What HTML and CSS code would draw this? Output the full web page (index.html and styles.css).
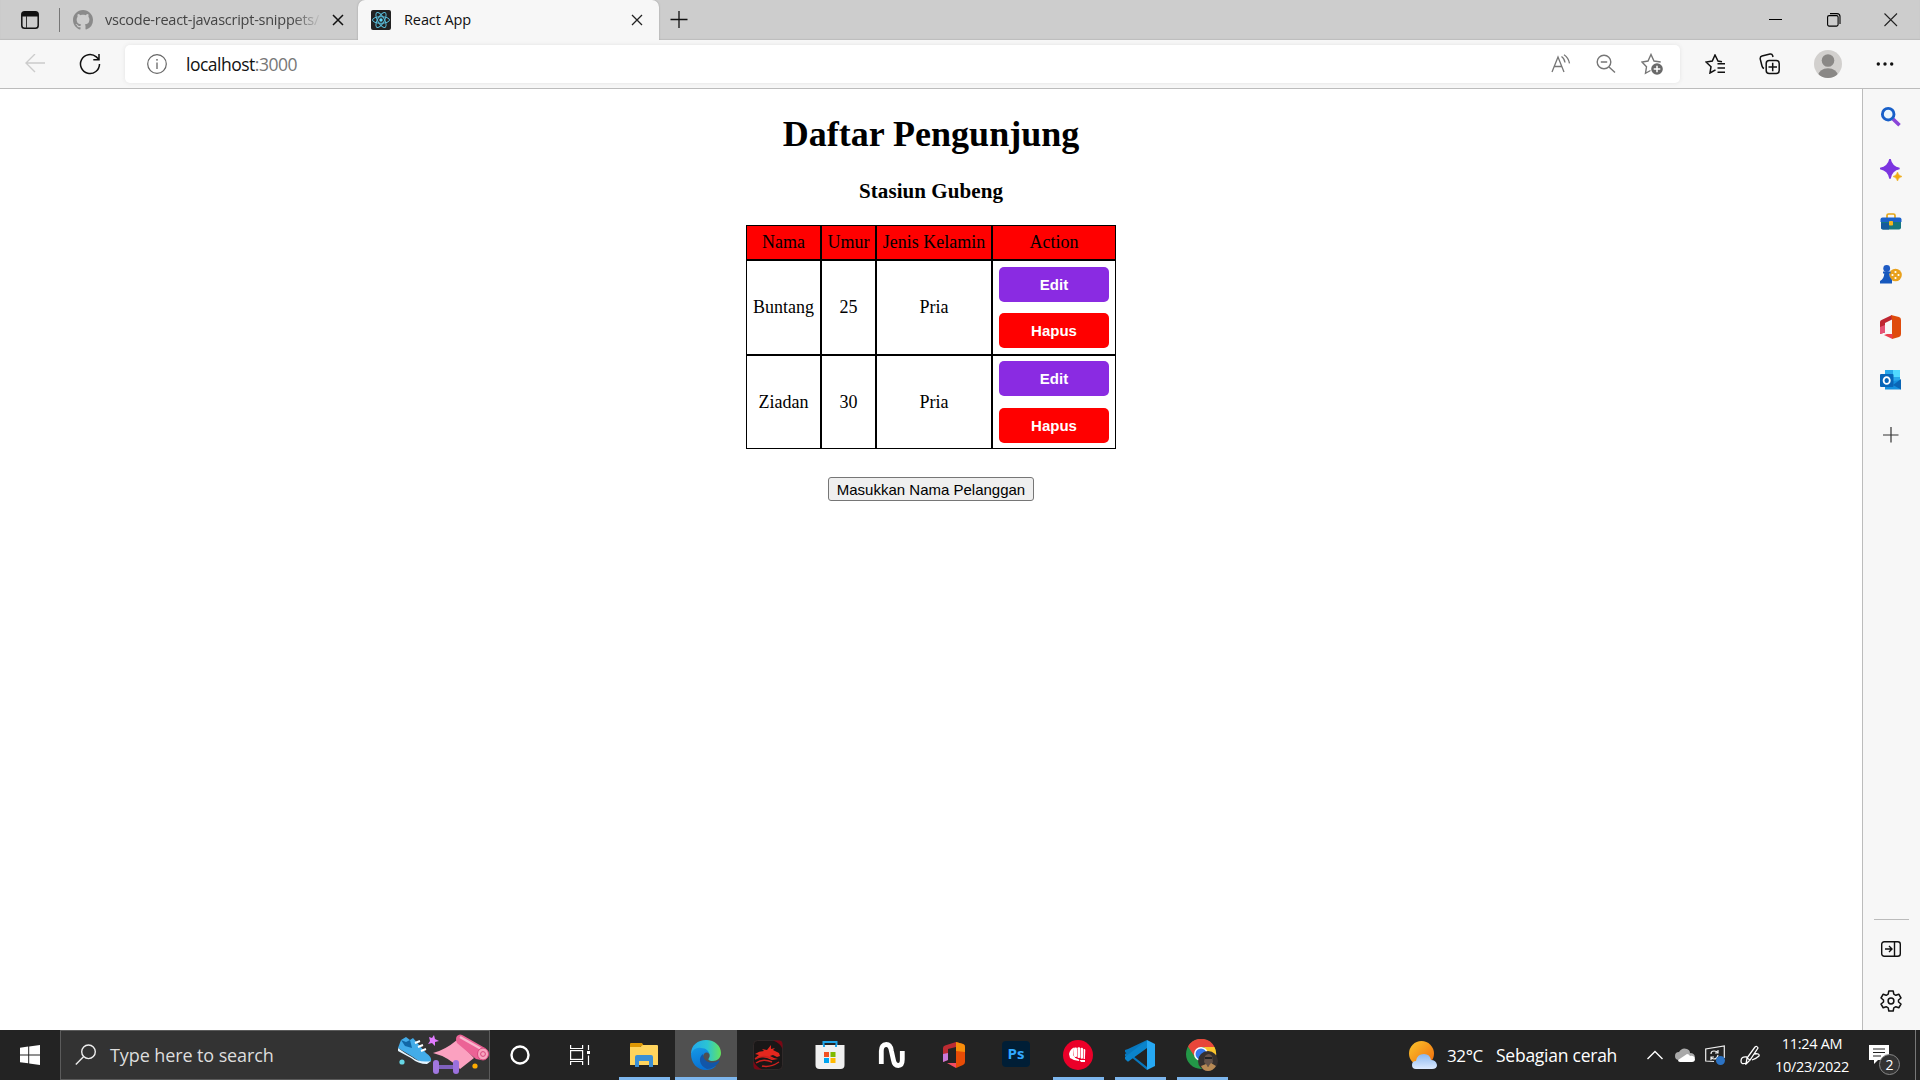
FILE: index.html
```html
<!DOCTYPE html>
<html lang="id">
<head>
<meta charset="utf-8">
<title>React App</title>
<link rel="stylesheet" href="styles.css">
</head>
<body>
<header class="tabbar">
  <svg class="tab-menu" width="18" height="18" viewBox="0 0 18 18"><rect x=".8" y=".8" width="16.4" height="16.4" rx="2.8" fill="none" stroke="#111" stroke-width="1.5"/><path d="M1 5.5V3.3Q1 1 3.300 1h11.400Q17 1 17 3.300v2.200z" fill="#111"/><path d="M5.500 5v12" stroke="#333"/></svg>
  <i class="divider"></i>
  <div class="tab idle">
    <svg width="20" height="20" viewBox="0 0 16 16"><path fill="#8a8a8a" d="M8 0C3.580 0 0 3.580 0 8c0 3.540 2.290 6.530 5.470 7.590.4.070.55-.17.55-.38 0-.19-.01-.82-.01-1.490-2.010.37-2.530-.49-2.690-.94-.09-.23-.48-.94-.82-1.130-.28-.15-.68-.52-.01-.53.63-.01 1.080.58 1.230.82.72 1.210 1.870.87 2.330.66.070-.52.28-.87.51-1.070-1.780-.2-3.640-.89-3.640-3.950 0-.87.31-1.590.82-2.150-.08-.2-.36-1.020.08-2.120 0 0 .67-.21 2.200.82.64-.18 1.320-.27 2-.27s1.360.09 2 .27c1.530-1.040 2.200-.82 2.200-.82.44 1.100.16 1.920.08 2.120.51.56.82 1.270.82 2.150 0 3.070-1.870 3.750-3.650 3.950.29.25.54.73.54 1.480 0 1.070-.01 1.930-.01 2.200 0 .21.15.46.55.38A8.010 8.010 0 0 0 16 8c0-4.420-3.580-8-8-8z"/></svg>
    <span class="tab-title faded">vscode-react-javascript-snippets/</span>
    <svg class="x" width="12" height="12" viewBox="0 0 12 12"><path d="M1 1l10 10M11 1L1 11" stroke="#111" stroke-width="1.5"/></svg>
  </div>
  <div class="tab active">
    <svg width="20" height="20" viewBox="0 0 20 20"><rect width="20" height="20" rx="2" fill="#222"/><g fill="none" stroke="#58bcd9" stroke-width="1"><ellipse cx="10" cy="10" rx="8.500" ry="3.300"/><ellipse cx="10" cy="10" rx="8.500" ry="3.300" transform="rotate(60 10 10)"/><ellipse cx="10" cy="10" rx="8.500" ry="3.300" transform="rotate(120 10 10)"/></g><circle cx="10" cy="10" r="1.700" fill="#61dafb"/></svg>
    <span class="tab-title">React App</span>
    <svg class="x" width="12" height="12" viewBox="0 0 12 12"><path d="M1 1l10 10M11 1L1 11" stroke="#222" stroke-width="1.300"/></svg>
  </div>
  <svg class="new-tab" width="18" height="18" viewBox="0 0 18 18"><path d="M.5 8.500h17M9 0v17" stroke="#111" stroke-width="1.300"/></svg>
  <div class="window-controls">
    <svg width="14" height="14" viewBox="0 0 14 14"><path d="M0 6.500h13" stroke="#000"/></svg>
    <svg width="14" height="14" viewBox="0 0 14 14"><rect x=".6" y="2.600" width="10.500" height="10.500" rx="1.500" fill="none" stroke="#000" stroke-width="1.100"/><path d="M3 .6h7q3 0 3 3V11" fill="none" stroke="#000" stroke-width="1.100"/></svg>
    <svg width="14" height="14" viewBox="0 0 14 14"><path d="M.5.500l12.500 12.500M13 .5L.5 13" stroke="#222" stroke-width="1.100"/></svg>
  </div>
</header>

<nav class="toolbar">
  <svg class="back" width="20" height="20" viewBox="0 0 20 20"><path d="M20 9H1M10 0L1 9l9 9" fill="none" stroke="#ccc" stroke-width="1.400"/></svg>
  <svg class="reload" width="22" height="22" viewBox="0 0 22 22"><path d="M20.500 11a9.500 9.500 0 1 1-3.200-7.100L20 6.500M20 1v5.700h-5.700" fill="none" stroke="#111" stroke-width="1.500"/></svg>
  <div class="address">
    <svg width="20" height="20" viewBox="0 0 20 20"><circle cx="10" cy="10" r="9.300" fill="none" stroke="#666" stroke-width="1.200"/><path d="M10 8.500V15" stroke="#666" stroke-width="1.300"/><circle cx="10" cy="5.800" r=".9" fill="#666"/></svg>
    <span class="url">localhost<span class="port">:3000</span></span>
    <div class="address-actions">
      <svg width="20" height="20" viewBox="0 0 20 20" fill="none" stroke="#767676" stroke-width="1.300"><path d="M1 18L7 3l6 15M3.200 12.500h7.600M10.500 2.500q3 2 3.500 6M13 .8q4.500 3 5.500 8.500"/></svg>
      <svg width="20" height="20" viewBox="0 0 20 20" fill="none" stroke="#767676" stroke-width="1.400"><circle cx="8" cy="8" r="6.800"/><path d="M4.800 8h6.400M13 13l6 5.500"/></svg>
      <svg width="22" height="22" viewBox="0 0 22 22"><path d="M9.500 17.500L4.500 20.300l1-6.500L1 9l6-1 3-6.500L13 8l6.700 1" fill="none" stroke="#767676" stroke-width="1.400"/><circle cx="16" cy="16" r="5.800" fill="#696969"/><path d="M12.700 16h6.600M16 12.700v6.600" stroke="#fff" stroke-width="1.500"/></svg>
    </div>
  </div>
  <div class="toolbar-icons">
    <svg width="20" height="20" viewBox="0 0 20 20" fill="none" stroke="#111" stroke-width="1.500"><path d="M10.500 15.800L5 19l1-6.300L1 8l6.300-1L10 1l3 6 4 .7M12.500 9.800H20M12.500 14H20M12.500 18.300H20"/></svg>
    <svg width="22" height="22" viewBox="0 0 22 22" fill="none" stroke="#111" stroke-width="1.500"><path d="M5 15.500Q3.500 15 3 13L1.200 6Q1 3.500 3 3L11 1q2-.4 2.600 1.400L14 4"/><rect x="7.200" y="7.500" width="13" height="13" rx="3"/><path d="M9.500 14h8.500M13.700 9.700v8.500"/></svg>
    <svg width="28" height="28" viewBox="0 0 28 28"><clipPath id="face"><circle cx="14" cy="14" r="14"/></clipPath><g clip-path="url(#face)"><rect width="28" height="28" fill="#d2d0ce"/><circle cx="14" cy="10.500" r="6.300" fill="#8a8886"/><ellipse cx="14" cy="26" rx="10" ry="7.800" fill="#8a8886"/></g></svg>
    <svg width="18" height="6" viewBox="0 0 18 6" fill="#111"><circle cx="2.300" cy="3" r="1.700"/><circle cx="9" cy="3" r="1.700"/><circle cx="15.700" cy="3" r="1.700"/></svg>
  </div>
</nav>

<div class="workspace">
  <main class="page">
    <h1>Daftar Pengunjung</h1>
    <h3>Stasiun Gubeng</h3>
    <table class="visitors">
      <colgroup><col class="c-name"><col class="c-age"><col class="c-sex"><col class="c-action"></colgroup>
      <tr class="head"><td>Nama</td><td>Umur</td><td>Jenis Kelamin</td><td>Action</td></tr>
      <tr class="first"><td>Buntang</td><td>25</td><td>Pria</td><td class="action-cell"><div class="actions"><button class="edit">Edit</button><button class="delete">Hapus</button></div></td></tr>
      <tr class="second"><td>Ziadan</td><td>30</td><td>Pria</td><td class="action-cell"><div class="actions"><button class="edit">Edit</button><button class="delete">Hapus</button></div></td></tr>
    </table>
    <button class="add">Masukkan Nama Pelanggan</button>
  </main>
  <aside class="sidebar">
    <div class="apps">
      <svg width="22" height="22" viewBox="0 0 22 22"><path d="M13 13l6.500 6.200" stroke="#8a45d8" stroke-width="3.600"/><circle cx="8.200" cy="8.200" r="5.800" fill="#eaf6fd" stroke="#175fc9" stroke-width="2.900"/></svg>
      <svg width="22" height="22" viewBox="0 0 22 22"><path d="M10 0q1.500 8 9.500 9.500Q11.500 11 10 19.500 8.500 11 0 9.500 8.500 8 10 0z" fill="#7c35e0" stroke="#7c35e0" stroke-width="1.500"/><path d="M17.500 13q.8 3.800 4.500 4.500-3.700.8-4.500 4.500-.8-3.700-4.500-4.500 3.700-.7 4.500-4.500z" fill="#efaa14" stroke="#efaa14" stroke-width=".6"/></svg>
      <svg width="22" height="22" viewBox="0 0 22 22"><path d="M7 7V4.500Q7 3 8.500 3h5Q15 3 15 4.500V7" fill="none" stroke="#e5a617" stroke-width="1.700"/><path d="M1 10h20v6.500q0 2-2 2H3q-2 0-2-2z" fill="#16777f"/><path d="M1 12h8v6.500H3q-2 0-2-2z" fill="#155a9e"/><path d="M.5 8.500q0-2 2-2h17q2 0 2 2V11H.5z" fill="#1b62cc"/><rect x="9" y="10" width="4" height="4.500" rx=".8" fill="#f6b51e"/></svg>
      <svg width="22" height="22" viewBox="0 0 22 22"><circle cx="15.500" cy="11" r="6.300" fill="#e9a11d"/><g fill="#fff"><circle cx="15.500" cy="8" r="1.100"/><circle cx="15.500" cy="14" r="1.100"/><circle cx="12.500" cy="11" r="1.100"/><circle cx="18.500" cy="11" r="1.100"/></g><circle cx="6.700" cy="4.500" r="3.400" fill="#1e5bc4"/><path d="M3 7.500h7.500v2H9q.3 4.500 3 6.500v3.500H0V17q4-2 4.300-7.500H3z" fill="#1758bd"/></svg>
      <svg class="office" width="22" height="24" viewBox="0 0 22 24"><path d="M0 7Q0 5.500 1.500 5L12 0v4.500L5 8v9.500L0 19z" fill="#bf2631"/><path d="M0 12l5-2v7.500L0 19z" fill="#e65275"/><path d="M11 0l8 2q2 .5 2 3v14q0 2.500-2 3l-7 2V5z" fill="#df4b0c"/><path d="M4 20l3-1h5.500v5z" fill="#eb3e4e"/></svg>
      <svg width="22" height="22" viewBox="0 0 22 22"><path d="M5 1h15v12H5z" fill="#28a8ea"/><path d="M13 1h7v7h-7z" fill="#50d9ff"/><path d="M5 13l16-2v9.500H5z" fill="#1490df"/><path d="M21 10v10.500L13 16z" fill="#0a65b5"/><rect y="5" width="13.500" height="13" rx="1" fill="#0865b8"/><ellipse cx="6.700" cy="11.500" rx="3.100" ry="3.400" fill="none" stroke="#fff" stroke-width="1.800"/></svg>
      <svg width="16" height="16" viewBox="0 0 16 16"><path d="M0 8h15.500M8 0v15.500" stroke="#333" stroke-width="1.200"/></svg>
    </div>
    <div class="settings">
      <svg width="20" height="16" viewBox="0 0 20 16" fill="none" stroke="#111" stroke-width="1.400"><rect x=".7" y=".8" width="18.600" height="14.400" rx="2.500"/><path d="M13.500 1v14M4 8h7M8 5l3 3-3 3"/></svg>
      <svg width="22" height="22" viewBox="0 0 22 22" fill="none" stroke="#111" stroke-width="1.500" stroke-linejoin="round"><path d="M8.800 1h4.400l.6 3.200 2 1.100 3-1.100 2.200 3.800-2.500 2v2l2.500 2-2.200 3.800-3-1.100-2 1.100-.6 3.200H8.800l-.6-3.200-2-1.100-3 1.100L1 14l2.500-2v-2L1 8l2.200-3.800 3 1.100 2-1.100z"/><circle cx="11" cy="11" r="2.900"/></svg>
    </div>
  </aside>
</div>

<footer class="taskbar">
  <div class="start"><svg width="20" height="20" viewBox="0 0 20 20" fill="#fff"><path d="M0 2.800L8.200 1.600v7.800H0zM9.200 1.400L20 0v9.400H9.200zM0 10.400h8.200v7.900L0 17.200zM9.200 10.400H20V20L9.200 18.400z"/></svg></div>
  <div class="search">
    <svg width="22" height="22" viewBox="0 0 22 22" fill="none" stroke="#eee" stroke-width="1.400"><circle cx="13.500" cy="7.800" r="6.800"/><path d="M8.500 12.800L.8 20.500"/></svg>
    <span class="search-text">Type here to search</span>
    <svg class="art" width="92" height="44" viewBox="0 0 92 44">
      <path d="M1 15L4 7l5-3 4 3 3-2 13 15q6 4 5 8l-5 2q-7-1-13-6Z" fill="#43ace9"/><path d="M1 15q8 6 14 9 7 6 19 4l-4 3q-9 0-16-6L1 18z" fill="#e5f5ff"/><path d="M4 7l4 6 7 2-2-8-4 2z" fill="#1267a6"/><path d="M18 10l5-2M21 14l5-2M24 18l5-2" stroke="#fff" stroke-width="2"/>
      <path d="M36 20q12-3 24-13l17 18-14 11Q52 24 36 20z" fill="#fba1c0"/><path d="M60 3q3-3 7 0l21 12-4 12-5-1L60 10q-2-4 0-7z" fill="#ec6396"/><path d="M63 4l23 13" stroke="#fab5cd" stroke-width="2.500"/><ellipse cx="86" cy="21" rx="5.500" ry="6" fill="#f8a5c0" stroke="#d9477e"/><circle cx="86" cy="21" r="2.400" fill="none" stroke="#d9477e"/>
      <path d="M32 4l3 1 2-3 1 4 4 2-4 1v4l-3-3-4 1 2-3z" fill="#e17cff"/><path d="M38 34h22" stroke="#7e61bd" stroke-width="4"/><rect x="36" y="27" width="6" height="14" rx="3" fill="#a077df"/><rect x="56" y="27" width="6" height="14" rx="3" fill="#9b70dd"/><circle cx="5" cy="29" r="2.600" fill="#67d7e5"/><circle cx="78" cy="33" r="2.600" fill="#ffac00"/>
    </svg>
  </div>
  <div class="system-button"><svg width="20" height="20" viewBox="0 0 20 20"><circle cx="10" cy="10" r="8.500" fill="none" stroke="#fff" stroke-width="2.400"/></svg></div>
  <div class="system-button"><svg width="20" height="20" viewBox="0 0 20 20" fill="none" stroke="#fff" stroke-width="1.200"><path d="M.6 0v3.500h12V0M.6 20v-3.500h12V20M18.500 0v5M18.500 10.500V20"/><rect x=".6" y="5.600" width="12" height="8.800"/><path d="M17 7.500h3" stroke-width="3"/></svg></div>
  <div class="task running"><svg width="28" height="26" viewBox="0 0 28 26"><path d="M0 2Q0 1 1 1h11l2 3h-3L9 6H0z" fill="#dd9704"/><path d="M0 5h10l3-2h14q1 0 1 1v19H0z" fill="#ffd45d"/><path d="M5 25V15q0-2 2-2h14q2 0 2 2v10h-4v-6H9v6z" fill="#3b8fd5"/></svg></div>
  <div class="task running current"><svg width="30" height="30" viewBox="0 0 30 30"><defs><linearGradient id="wave"><stop stop-color="#21a7ed"/><stop offset=".55" stop-color="#2bc4d3"/><stop offset="1" stop-color="#65e45d"/></linearGradient><linearGradient id="deep" x2=".3" y2="1"><stop stop-color="#1598e4"/><stop offset="1" stop-color="#0871d3"/></linearGradient></defs><path d="M0 14C0 5 7 0 15 0c9 0 15 6 15 13 0 5-4 8-8 8-5 0-5-2-4-3 4-7-9-12-18-4z" fill="url(#wave)"/><path d="M0 14c2-5 6-7 10-6 5 0 8 3 8 6-2-3-6-1-6 3 0 6 7 10 13 9-3 3-7 4-10 4C6 30 0 23 0 14z" fill="url(#deep)"/><path d="M12 14c-5 3-4 12 4 15 5 0 9-3 12-7 1-1 0-2-1-1-8 4-15 0-15-7z" fill="#1256a8"/></svg></div>
  <div class="task"><svg width="30" height="30" viewBox="0 0 30 30"><rect x=".5" y=".5" width="29" height="29" rx="4" fill="#191717" stroke="#302929"/><path d="M20 .5h6q3.500 0 3.500 4V9q-2-6-9.500-8.500zM.5 21v5q0 3.500 4 3.500h5q-6-2-9-8.500z" fill="#7b0714"/><path d="M2 14q4-3 9-3l-2-2 5 1 4-5v4l4-1-2 2 6 3 1 3-3 1-4-2-3 1 4 2 4 1-6 1-5-2-5-1-7 1 4-3z" fill="#e5271e"/><path d="M2 19q9-5 18 0M3 23q7-5 16-1M9 26q8 2 17-4" fill="none" stroke="#cf211e" stroke-width="1.500"/></svg></div>
  <div class="task"><svg width="30" height="30" viewBox="0 0 30 30"><path d="M8.500 7V2h13v5" fill="none" stroke="#20a5e9" stroke-width="2"/><path d="M.5 5h29v20q0 4-4 4h-21q-4 0-4-4z" fill="#f0f0f0"/><path d="M8 5h2v2H8zM20 5h2v2h-2z" fill="#20a5e9"/><path d="M9 12h5v5H9z" fill="#f25022"/><path d="M15.500 12h5v5h-5z" fill="#7fba00"/><path d="M9 18h5v5H9z" fill="#00a4ef"/><path d="M15.500 18h5v5h-5z" fill="#ffb900"/></svg></div>
  <div class="task"><svg width="28" height="28" viewBox="0 0 28 28"><path d="M3.300 23V10q0-6.500 5-6.500 4 0 5 6l2 9q1 6 5 6t4-6V10" fill="none" stroke="#fff" stroke-width="4.800"/></svg></div>
  <div class="task"><svg width="24" height="28" viewBox="0 0 24 28"><path d="M1 7Q1 5 3 4.500L14 1v5L6 8v11l-5 2z" fill="#bd2b32"/><path d="M1 13l5-1v7l-5 2z" fill="#c979d9"/><path d="M14 1l7 2q2 .5 2 3v15q0 2-2 3l-7 3z" fill="#e74c06"/><path d="M14 1l7 2q2 .5 2 3v5l-9-1z" fill="#f78e0b"/><path d="M5 22h9v5z" fill="#f34b63"/></svg></div>
  <div class="task"><div class="ps">Ps</div></div>
  <div class="task running"><svg width="30" height="30" viewBox="0 0 30 30"><circle cx="15" cy="15" r="15" fill="#eb0029"/><g fill="#fff"><path d="M6 14q1-5 5-6.500l-.5 8L13 19l-2 1-4-2z"/><rect x="11" y="7.500" width="3" height="9.500" rx="1"/><rect x="14.500" y="7.200" width="2.600" height="10.800" rx="1"/><rect x="17.600" y="7.800" width="2.400" height="11" rx="1"/><path d="M20.600 9q1.600-.3 1.700 1l-.4 9h-1.300zM10 17l6 2.500V21l-5-1zM16.500 20H22v2h-4z"/></g></svg></div>
  <div class="task running"><svg width="30" height="30" viewBox="0 0 30 30"><path d="M22 0L3 18l-3-2v-2l3-2 19 15v3L0 12q-1-1 0-2l3-1z" fill="#0877bd"/><path d="M22 0v8L4 21q-1 1-2 0l-2-2v-2z" fill="#0a84cc"/><path d="M22 0l8 4v22l-8 4z" fill="#26a8f3"/></svg></div>
  <div class="task running"><svg width="32" height="32" viewBox="0 0 32 32"><circle cx="15" cy="15" r="15" fill="#239747"/><path d="M2 7.500A15 15 0 0 1 28.500 8H15L9 18z" fill="#e8463a"/><path d="M28.500 8A15 15 0 0 1 16 30l6-12-4-10z" fill="#fcc52c"/><circle cx="15" cy="15" r="7" fill="#fff"/><circle cx="15" cy="15" r="5.500" fill="#3478ed"/><circle cx="22" cy="22" r="10" fill="#35302f"/><path d="M19 17q4-4 7 0l1 6-3 4h-3l-3-4z" fill="#65534a"/><path d="M15 27l5-2 2 3 3-4 5 3q-3 5-8 5-5 0-7-5z" fill="#b88a55"/><path d="M19 19h7" stroke="#222" stroke-width="2"/></svg></div>
  <div class="tray">
    <svg class="weather" width="28" height="28" viewBox="0 0 28 28"><defs><linearGradient id="sun" x2="1" y2="1"><stop stop-color="#f9c52c"/><stop offset="1" stop-color="#f2680b"/></linearGradient><linearGradient id="cloud" x2="0" y2="1"><stop stop-color="#8bb7ef"/><stop offset="1" stop-color="#dceaff"/></linearGradient></defs><circle cx="12.500" cy="12.500" r="12.500" fill="url(#sun)"/><path d="M7 28q-4 0-4-4 0-4 4-4 1-7 8-7 6 0 7 6 5 0 6 5 0 4-5 4z" fill="url(#cloud)"/></svg>
    <span class="temp">32°C</span><span class="sky">Sebagian cerah</span>
    <svg class="chevron" width="16" height="10" viewBox="0 0 16 10"><path d="M.5 9L8 1.500 15.500 9" fill="none" stroke="#fff" stroke-width="1.400"/></svg>
    <svg class="onedrive" width="20" height="14" viewBox="0 0 20 14"><path d="M4 12q-4 0-4-4 0-4 4-4 3-5 8-3 3 1 3 4 5 0 5 5z" fill="#a9a9a9"/><path d="M3 12l9-6q2 0 3 2 4-1 5 3 0 3-3 3H5q-2 0-2-2z" fill="#fff"/></svg>
    <svg class="sync" width="20" height="20" viewBox="0 0 20 20" fill="none" stroke="#eee" stroke-width="1.200"><path d="M9 16.500L.7 16V4L19.300 1v12"/><path d="M6 9q0-3 3-3 3 0 4 2M13 5v3h-3M13 10q-1 4-4 4-2 0-3-2M6 15v-3h3"/><circle cx="15.500" cy="15.500" r="4.500" fill="#2c73c4" stroke="none"/></svg>
    <svg class="pen" width="20" height="20" viewBox="0 0 20 20" fill="none" stroke="#fff" stroke-width="1.300"><path d="M6 19l1-6 8-11q2-1.500 3 1L10 15zM7 13l3 2M7 12q-6-1-6 4 0 4 5 2M14 9q6-1 5 2-2 2-7 4"/></svg>
    <div class="clock"><span class="time">11:24 AM</span><span class="date">10/23/2022</span></div>
    <div class="notice"><svg width="20" height="20" viewBox="0 0 20 20"><path d="M0 0h20v15H9l-4 4v-4H0z" fill="#fff"/><path d="M4 4h12M4 7.500h12M4 11h8" stroke="#222" stroke-width="1.200"/></svg><span class="badge">2</span></div>
    <i class="show-desktop"></i>
  </div>
</footer>
</body>
</html>
```
FILE: styles.css
```css
* { box-sizing: border-box; }
body {
  margin: 0;
  width: 1920px;
  height: 1080px;
  overflow: hidden;
  display: flex;
  flex-direction: column;
  background: #fff;
  font-family: "Open Sans", "Noto Sans", sans-serif;
}
svg { display: block; flex: none; }
button { margin: 0; }

/* Tabs */
.tabbar { height: 40px; flex: none; display: flex; align-items: center; background: #cdcdcd; box-shadow: inset 0 -1px 1px #bdbdbd; }
.tab-menu { margin-left: 21px; }
.divider { width: 1px; height: 24px; margin-left: 20px; background: #777; }
.tab { display: flex; align-items: center; height: 40px; }
.tab-title { margin-left: 12px; font-size: 14.5px; line-height: 20px; white-space: nowrap; color: #111; letter-spacing: -.1px; }
.idle { width: 297px; padding-left: 13px; }
.idle .tab-title { width: 217px; overflow: hidden; color: #444; letter-spacing: -.25px; }
.faded { -webkit-mask-image: linear-gradient(90deg, #000 86%, transparent); mask-image: linear-gradient(90deg, #000 86%, transparent); }
.idle .x { margin-left: 10px; }
.active { width: 301px; margin-left: 1px; padding: 0 16px 0 13px; background: #f7f7f7; border-radius: 7px 7px 0 0; box-shadow: 0 0 2px #999; clip-path: inset(0 -3px 0 -3px); }
.active .tab-title { margin-left: 13px; }
.active .x { margin-left: auto; }
.new-tab { margin-left: 11px; }
.window-controls { display: flex; gap: 43.500px; margin-left: auto; margin-right: 22px; }

/* Address row */
.toolbar { height: 49px; flex: none; display: flex; align-items: center; background: #f7f7f7; border-bottom: 1px solid #bcbcbc; }
.back { margin-left: 25px; }
.reload { margin-left: 34px; }
.address { display: flex; align-items: center; width: 1555px; height: 38px; margin-left: 24px; padding-left: 22px; border-radius: 5px; background: #fff; box-shadow: 0 0 4px #e3e3e3; }
.url { margin-left: 18px; padding: 0 0 1px 1px; font-size: 17.5px; letter-spacing: -.5px; color: #111; }
.port { color: #777; }
.address-actions { display: flex; align-items: center; gap: 25px; margin-left: auto; padding-right: 17px; }
.toolbar-icons { display: flex; align-items: center; margin-left: 25px; }
.toolbar-icons svg:nth-child(2) { margin-left: 34px; }
.toolbar-icons svg:nth-child(3) { margin-left: 33px; }
.toolbar-icons svg:nth-child(4) { margin-left: 34px; }

/* Visitor page */
.workspace { display: flex; height: 941px; }
.page { width: 1862px; display: flex; flex-direction: column; align-items: center; font-family: "Liberation Serif", serif; font-size: 18px; color: #000; }
h1 { margin: 24px 0 0; font-size: 36px; line-height: 42px; }
h3 { margin: 24px 0 0; font-size: 21.060px; line-height: 24px; letter-spacing: .05px; }
.visitors { width: 370px; margin-top: 22px; border-spacing: 0; table-layout: fixed; }
.c-name { width: 75px; }
.c-age { width: 55px; }
.c-sex { width: 116px; }
.c-action { width: 124px; }
.visitors td { padding: 0 0 1px; border: 1px solid #000; text-align: center; vertical-align: middle; line-height: 20px; }
.visitors .action-cell { padding: 0; }
.head { height: 35px; background: #f00; }
.first { height: 95px; }
.second { height: 94px; }
.actions { display: flex; flex-direction: column; align-items: center; gap: 11px; }
.second .actions { gap: 12px; }
.edit, .delete { width: 110px; height: 35px; padding: 0; border: 0; border-radius: 5px; color: #fff; font: bold 15px "Liberation Sans", sans-serif; }
.edit { background: blueviolet; }
.delete { background: #f00; }
.add { width: 206px; height: 24px; margin-top: 28px; padding: 1px 0 0; border: 1px solid #767676; border-radius: 3px; background: #efefef; color: #000; font: 15px "Liberation Sans", sans-serif; white-space: nowrap; }

/* Browser sidebar */
.sidebar { width: 58px; display: flex; flex-direction: column; justify-content: space-between; background: #f7f7f7; border-left: 1px solid #bcbcbc; padding-right: 1px; }
.apps { display: flex; flex-direction: column; align-items: center; gap: 30.5px; padding-top: 17px; }
.apps .office { margin: -1px 0; }
.apps svg:last-child { margin-top: 6px; }
.settings { display: flex; flex-direction: column; align-items: center; gap: 33px; width: 35px; height: 111px; margin: 0 auto; padding-top: 21px; border-top: 1px solid #bbb; }

/* Taskbar */
.taskbar { height: 50px; flex: none; display: flex; background: #232323; color: #fff; }
.start { width: 60px; display: flex; align-items: center; justify-content: center; }
.search { width: 430px; display: flex; align-items: center; padding-left: 14px; border: 1px solid #5b5b5b; background: #333; }
.search-text { margin-left: 13px; font-size: 18px; letter-spacing: -.1px; color: #ddd; white-space: nowrap; }
.art { margin-left: auto; }
.system-button { width: 60px; display: flex; align-items: center; justify-content: center; }
.system-button + .task { margin-left: 3px; }
.task { width: 62px; display: flex; align-items: center; justify-content: center; background: linear-gradient(#7db6ed, #7db6ed) center bottom / 0 3px no-repeat; }
.running { background-size: 51px 3px; }
.current { background-color: #505050; background-size: 62px 3px; }
.ps { width: 28px; height: 26px; margin-top: -3px; border-radius: 4px; background: #001e36; color: #31a8ff; font-size: 15px; font-weight: 700; line-height: 24px; text-align: center; }
.tray { display: flex; align-items: center; margin-left: auto; white-space: nowrap; }
.temp { width: 47px; padding-left: 10px; font-size: 17px; letter-spacing: -.4px; }
.sky { width: 133px; padding-left: 12px; font-size: 17.5px; letter-spacing: -.25px; }
.chevron { margin-left: 30px; }
.onedrive { margin-left: 12px; }
.sync { margin-left: 10px; }
.pen { margin-left: 15px; }
.clock { width: 82px; display: flex; flex-direction: column; align-items: center; margin-left: 11px; font-size: 14.500px; line-height: 23px; letter-spacing: -.3px; }
.notice { position: relative; margin-left: 16px; }
.badge { position: absolute; left: 10px; top: 9px; width: 21px; height: 21px; border: 1px solid #888; border-radius: 50%; background: #333; font-size: 14px; line-height: 19px; text-align: center; }
.show-desktop { width: 5px; height: 50px; margin-left: 26px; border-left: 1px solid #777; }
```
